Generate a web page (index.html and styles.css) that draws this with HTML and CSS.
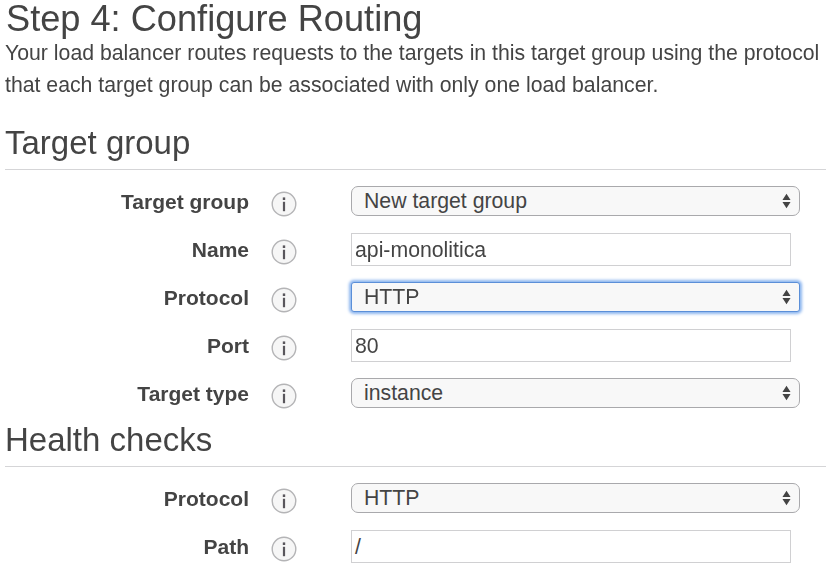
FILE: index.html
```html
<!DOCTYPE html>
<html lang="en">

<head>
    <meta charset="UTF-8">
    <title>Step 4: Configure Routing</title>
    <link rel="stylesheet" href="styles.css">
</head>
<body>
    <svg class="defs" width="0" height="0">
        <symbol id="arrows" viewBox="0 0 10 18">
            <path d="M5 1 L9.5 8 H0.5 Z M5 17 L0.5 10 H9.5 Z"/>
        </symbol>
        <symbol id="info" viewBox="0 0 26 26">
            <circle cx="13" cy="13" r="11.8" fill="#f6f6f6" stroke="#b4b4b6" stroke-width="1.4"/>
            <rect x="11.8" y="6.4" width="2.4" height="2.6" fill="#59565c"/>
            <rect x="11.9" y="10.8" width="2.2" height="9.4" fill="#59565c"/>
        </symbol>
    </svg>

    <main>
        <h1>Step 4: Configure Routing</h1>
        <p class="intro">Your load balancer routes requests to the targets in this target group using the protocol<br>that each target group can be associated with only one load balancer.</p>

        <h2 class="firstSection">Target group</h2>
        <section class="formRows">
            <label>Target group</label>
            <svg class="info"><use href="#info"/></svg>
            <div class="fakeSelect"><span>New target group</span><svg class="arrows"><use href="#arrows"/></svg></div>

            <label>Name</label>
            <svg class="info"><use href="#info"/></svg>
            <div class="textInput">api-monolitica</div>

            <label>Protocol</label>
            <svg class="info"><use href="#info"/></svg>
            <div class="fakeSelect focused"><span>HTTP</span><svg class="arrows"><use href="#arrows"/></svg></div>

            <label>Port</label>
            <svg class="info"><use href="#info"/></svg>
            <div class="textInput">80</div>

            <label>Target type</label>
            <svg class="info"><use href="#info"/></svg>
            <div class="fakeSelect"><span>instance</span><svg class="arrows"><use href="#arrows"/></svg></div>
        </section>

        <h2 class="secondSection">Health checks</h2>
        <section class="formRows">
            <label>Protocol</label>
            <svg class="info"><use href="#info"/></svg>
            <div class="fakeSelect"><span>HTTP</span><svg class="arrows"><use href="#arrows"/></svg></div>

            <label>Path</label>
            <svg class="info"><use href="#info"/></svg>
            <div class="textInput">/</div>
        </section>
    </main>
</body>

</html>
```

FILE: styles.css
```css
* {
    margin: 0;
    padding: 0;
    box-sizing: border-box;
}

html, body {
    height: 583px;
    overflow: hidden;
}

body {
    background-color: #fff;
    color: #444;
    font-family: "Liberation Sans", Arial, sans-serif;
}

main {
    filter: blur(0.5px); /* the reference is a soft video frame */
}

.defs {
    position: absolute;
}

h1 {
    font-size: 36.2px;
    font-weight: 400;
    line-height: 37px;
    margin-left: 6px;
    white-space: nowrap;
}

.intro {
    font-size: 21.25px;
    line-height: 32px;
    margin-left: 5px;
    white-space: nowrap;
}

h2 {
    font-size: 33px;
    font-weight: 400;
    line-height: 36px;
    margin-left: 5px;
    padding-bottom: 8px;
    margin-bottom: 15px;
    border-bottom: 1px solid #d5d5d7;
}

.firstSection {
    margin-top: 24px;
}

.secondSection {
    margin-top: 13px;
}

.formRows {
    display: grid;
    grid-template-columns: 249px 102px 1fr;
    grid-auto-rows: 32px;
    row-gap: 16px;
    align-items: center;
    padding-right: 26px;
}

label {
    font-size: 21px;
    font-weight: 700;
    text-align: right;
    color: #444;
    padding-top: 2px;
}

.info {
    width: 26px;
    height: 26px;
    margin-left: 22px;
    margin-top: 6px;
}

.fakeSelect {
    height: 30px;
    display: flex;
    align-items: center;
    justify-content: space-between;
    padding: 0 8px 0 12px;
    font-size: 21.25px;
    background-color: #f8f8f8;
    border: 1px solid #a9a9ac;
    border-radius: 7px;
}

.focused {
    border-color: #5b8fd8;
    box-shadow: 0 0 3px 2px #8db6ef;
    border-radius: 3px;
}

.arrows {
    width: 9px;
    height: 18px;
    fill: #444;
}

.textInput {
    height: 33px;
    line-height: 33px;
    padding-left: 3px;
    margin-right: 9px;
    font-size: 21.25px;
    border: 1px solid #d0d0d2;
    background-color: #fff;
}
```
